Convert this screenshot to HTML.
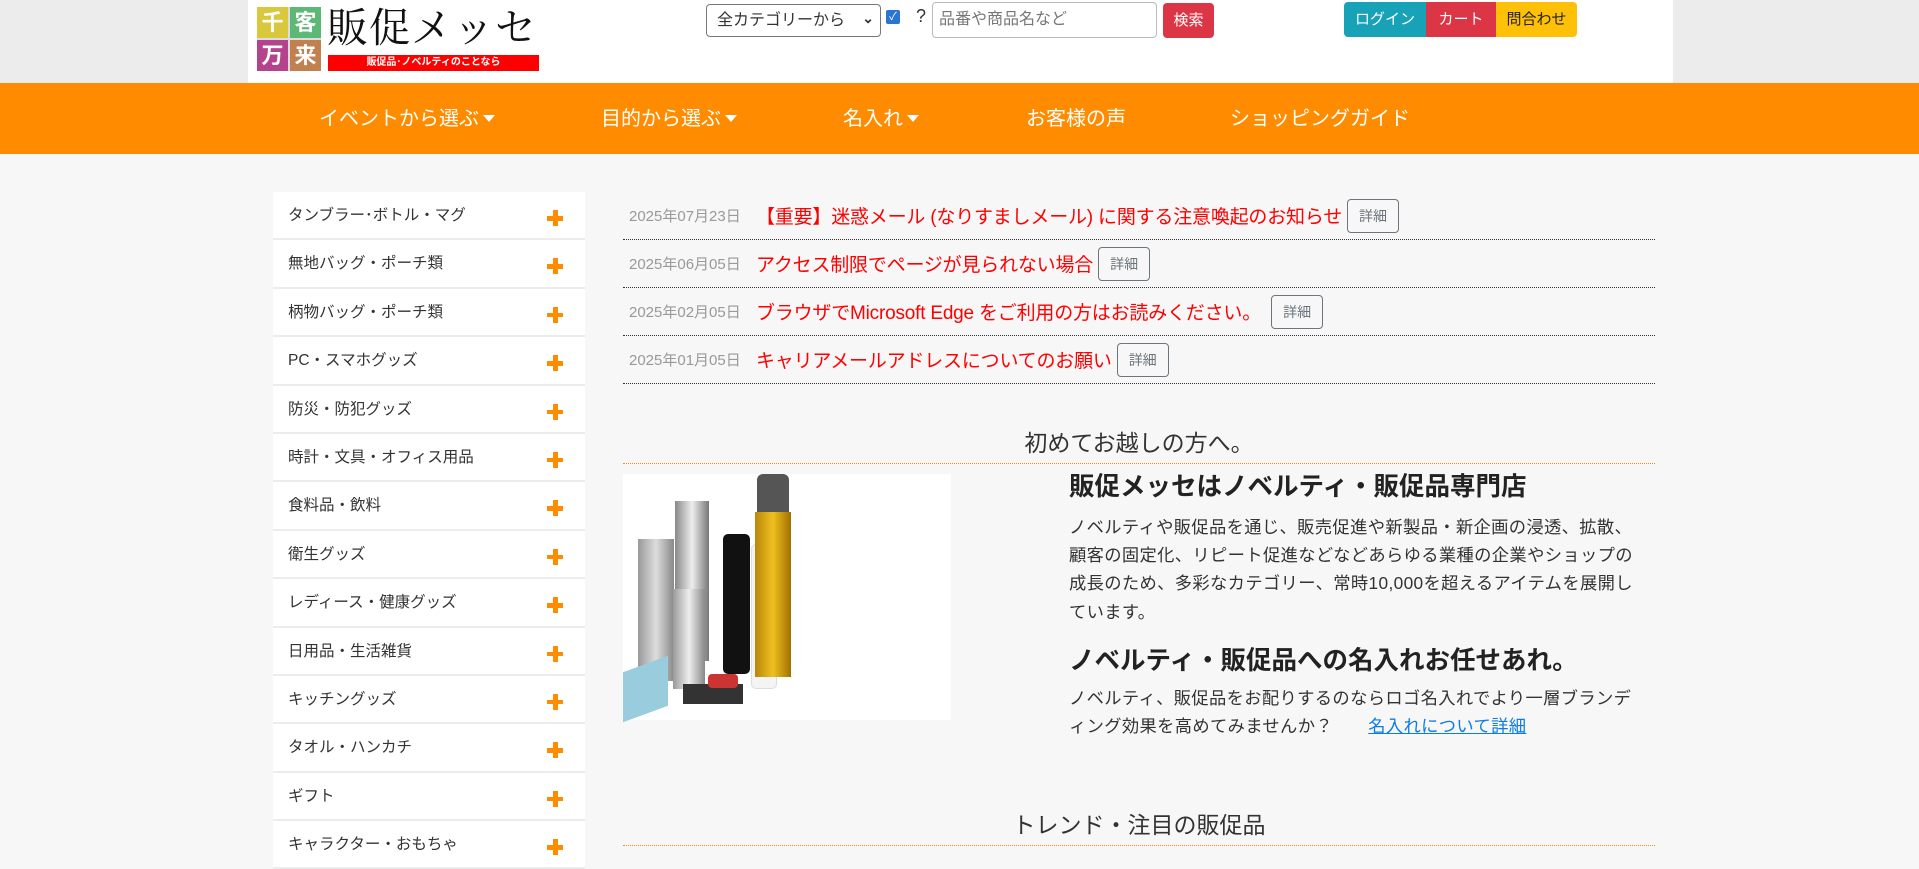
<!DOCTYPE html>
<html><head><meta charset="utf-8"><style>
*{box-sizing:border-box;margin:0;padding:0}
body{width:1919px;height:856px;overflow:hidden;background:#f7f7f7;font-family:"Liberation Sans","Noto Sans CJK JP",sans-serif;color:#333;position:relative}
.abs{position:absolute}
.topbg{position:absolute;left:0;top:0;width:1919px;height:83px;background:#ececec}
.top{position:absolute;left:248px;top:0;width:1425px;height:83px;background:#fff}
.nav{position:absolute;left:0;top:83px;width:1919px;height:71px;background:#ff8c00}
.nav span{position:absolute;top:23px;color:#fff;font-size:20px;line-height:26px;white-space:nowrap}
.car{display:inline-block;width:0;height:0;border-left:6px solid transparent;border-right:6px solid transparent;border-top:7px solid #fff;vertical-align:middle;margin-left:4px;margin-top:-3px}
.side{position:absolute;left:273px;top:192px;width:312px}
.side div{height:48.4px;background:#fff;border-bottom:2px solid #ececec;position:relative;font-size:15.5px;line-height:24px;padding:12px 0 0 15px;color:#333}
.side div b{position:absolute;left:274px;top:18px;width:16px;height:16px}
.side div b:before{content:"";position:absolute;left:0;top:6px;width:16px;height:4.5px;background:#ff8c00}
.side div b:after{content:"";position:absolute;left:6px;top:0;width:4.5px;height:16px;background:#ff8c00}
.news{position:absolute;left:623px;width:1032px;height:48px;border-bottom:1px dotted #333}
.news .d{position:absolute;left:6px;top:13px;font-size:15px;color:#999}
.news .t{position:absolute;left:133px;top:9px;font-size:19px;color:#f00;white-space:nowrap;letter-spacing:-0.2px}
.btn{display:inline-block;border:1px solid #6c757d;border-radius:4px;color:#6c757d;font-size:14px;padding:6px 11px;margin-left:5px;vertical-align:middle;position:relative;top:-2px;letter-spacing:0}
.h2{position:absolute;left:623px;width:1032px;text-align:center;font-size:23px;color:#333;border-bottom:1px dotted #f08c1a}
.p{font-size:17.3px;line-height:28.2px;color:#333;letter-spacing:0.35px}
</style></head><body>
<div class="topbg"></div>
<div class="top"></div>
<div class="abs" style="left:257px;top:7px;width:64px;height:64px;background:#ddd">
<div class="abs" style="left:0;top:0;width:31px;height:31px;background:#d9c83c;color:#fff;font-weight:bold;font-size:22px;text-align:center;line-height:31px">千</div>
<div class="abs" style="left:33px;top:0;width:31px;height:31px;background:#5cb874;color:#fff;font-weight:bold;font-size:22px;text-align:center;line-height:31px">客</div>
<div class="abs" style="left:0;top:33px;width:31px;height:31px;background:#b4428c;color:#fff;font-weight:bold;font-size:22px;text-align:center;line-height:31px">万</div>
<div class="abs" style="left:33px;top:33px;width:31px;height:31px;background:#c08050;color:#fff;font-weight:bold;font-size:22px;text-align:center;line-height:31px">来</div>
</div>
<div class="abs" style="left:327px;top:0px;font-family:'Noto Serif CJK SC',serif;font-size:41px;line-height:50px;color:#111;letter-spacing:1px">販促メッセ</div>
<div class="abs" style="left:328px;top:55px;width:211px;height:16px;background:#f00;color:#fff;font-size:10px;line-height:16px;text-align:center;font-weight:bold">販促品･ノベルティのことなら</div>
<div class="abs" style="left:706px;top:4px;width:175px;height:33px;border:1px solid #777;border-radius:4px;background:#fff;font-size:16px;line-height:31px;padding-left:10px">全カテゴリーから<span style="position:absolute;right:6px;top:-2px;font-size:14px;font-weight:bold">&#8964;</span></div>
<div class="abs" style="left:886px;top:10px;width:14px;height:14px;background:#2a74d2;border-radius:2px;color:#fff;font-size:11px;line-height:14px;text-align:center">✓</div>
<div class="abs" style="left:916px;top:6px;font-size:18px">?</div>
<div class="abs" style="left:932px;top:2px;width:225px;height:36px;border:1px solid #bbb;border-radius:4px;background:#fff;font-size:16px;line-height:34px;padding-left:6px;color:#777">品番や商品名など</div>
<div class="abs" style="left:1163px;top:3px;width:51px;height:35px;background:#dc3545;border-radius:4px;color:#fff;font-size:15px;line-height:35px;text-align:center">検索</div>
<div class="abs" style="left:1344px;top:2px;width:82px;height:35px;background:#17a2b8;border-radius:4px 0 0 4px;color:#fff;font-size:15px;line-height:35px;text-align:center">ログイン</div>
<div class="abs" style="left:1426px;top:2px;width:70px;height:35px;background:#dc3545;color:#fff;font-size:15px;line-height:35px;text-align:center">カート</div>
<div class="abs" style="left:1496px;top:2px;width:81px;height:35px;background:#ffc107;border-radius:0 4px 4px 0;color:#222;font-size:15px;line-height:35px;text-align:center">問合わせ</div>
<div class="nav">
<span style="left:319px">イベントから選ぶ<i class="car"></i></span>
<span style="left:601px">目的から選ぶ<i class="car"></i></span>
<span style="left:843px">名入れ<i class="car"></i></span>
<span style="left:1026px">お客様の声</span>
<span style="left:1230px">ショッピングガイド</span>
</div>
<div class="side">
<div>タンブラー･ボトル・マグ<b></b></div>
<div>無地バッグ・ポーチ類<b></b></div>
<div>柄物バッグ・ポーチ類<b></b></div>
<div>PC・スマホグッズ<b></b></div>
<div>防災・防犯グッズ<b></b></div>
<div>時計・文具・オフィス用品<b></b></div>
<div>食料品・飲料<b></b></div>
<div>衛生グッズ<b></b></div>
<div>レディース・健康グッズ<b></b></div>
<div>日用品・生活雑貨<b></b></div>
<div>キッチングッズ<b></b></div>
<div>タオル・ハンカチ<b></b></div>
<div>ギフト<b></b></div>
<div>キャラクター・おもちゃ<b></b></div>
</div>
<div class="news" style="top:192px"><span class="d">2025年07月23日</span><span class="t">【重要】迷惑メール (なりすましメール) に関する注意喚起のお知らせ<span class="btn">詳細</span></span></div>
<div class="news" style="top:240px"><span class="d">2025年06月05日</span><span class="t">アクセス制限でページが見られない場合<span class="btn">詳細</span></span></div>
<div class="news" style="top:288px"><span class="d">2025年02月05日</span><span class="t">ブラウザでMicrosoft Edge をご利用の方はお読みください。 <span class="btn">詳細</span></span></div>
<div class="news" style="top:336px"><span class="d">2025年01月05日</span><span class="t">キャリアメールアドレスについてのお願い<span class="btn">詳細</span></span></div>
<div class="h2" style="top:424px;height:40px">初めてお越しの方へ。</div>
<div class="abs" style="left:623px;top:474px;width:328px;height:246px;background:#fff">
<div class="abs" style="left:15px;top:65px;width:36px;height:142px;background:linear-gradient(90deg,#999,#ddd,#888)"></div>
<div class="abs" style="left:52px;top:27px;width:34px;height:160px;background:linear-gradient(90deg,#888,#eee,#777)"></div>
<div class="abs" style="left:50px;top:115px;width:32px;height:100px;background:linear-gradient(90deg,#999,#eee,#888)"></div>
<div class="abs" style="left:100px;top:60px;width:27px;height:140px;background:#111;border-radius:5px"></div>
<div class="abs" style="left:128px;top:70px;width:26px;height:145px;background:#f4f4f4;border-radius:5px;border:1px solid #ddd"></div>
<div class="abs" style="left:134px;top:0;width:32px;height:40px;background:#555;border-radius:6px 6px 0 0"></div>
<div class="abs" style="left:132px;top:38px;width:36px;height:165px;background:linear-gradient(90deg,#b8860b,#f0c020,#a07000)"></div>
<div class="abs" style="left:0;top:190px;width:45px;height:50px;background:#9cd;transform:skewY(-20deg)"></div>
<div class="abs" style="left:60px;top:210px;width:60px;height:20px;background:#333"></div>
<div class="abs" style="left:85px;top:200px;width:30px;height:14px;background:#c33;border-radius:4px"></div>
</div>
<div class="abs" style="left:1069px;top:470px;width:578px">
<div style="font-size:25.5px;font-weight:bold;color:#222;line-height:34px">販促メッセはノベルティ・販促品専門店</div>
<div class="p" style="margin-top:9px">ノベルティや販促品を通じ、販売促進や新製品・新企画の浸透、拡散、顧客の固定化、リピート促進などなどあらゆる業種の企業やショップの成長のため、多彩なカテゴリー、常時10,000を超えるアイテムを展開しています。</div>
<div style="font-size:25.5px;font-weight:bold;color:#222;line-height:34px;margin-top:18px">ノベルティ・販促品への名入れお任せあれ。</div>
<div class="p" style="margin-top:6px">ノベルティ、販促品をお配りするのならロゴ名入れでより一層ブランディング効果を高めてみませんか？　　<span style="color:#0a7ce8;text-decoration:underline">名入れについて詳細</span></div>
</div>
<div class="h2" style="top:806px;height:40px">トレンド・注目の販促品</div>
</body></html>
